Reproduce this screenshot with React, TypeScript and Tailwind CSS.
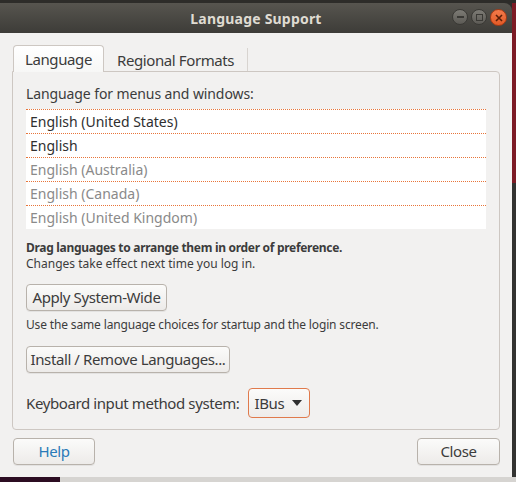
import React from "react";

const font = { fontFamily: '"Noto Sans", "Open Sans", sans-serif' };

function Btn({ children, className = "" }: { children: React.ReactNode; className?: string }) {
  return (
    <div
      className={
        "flex items-center justify-center whitespace-nowrap rounded-[4px] border border-[#b8b2ab] bg-gradient-to-b from-[#fbfbfa] to-[#edebe9] shadow-[0_1px_0_rgba(0,0,0,0.06)] text-[15px] tracking-[-0.4px] text-[#3c3c3c] " +
        className
      }
    >
      {children}
    </div>
  );
}

export default function App() {
  const langs = [
    { t: "English (United States)", dark: true },
    { t: "English", dark: true },
    { t: "English (Australia)", dark: false },
    { t: "English (Canada)", dark: false },
    { t: "English (United Kingdom)", dark: false },
  ];
  return (
    <div className="w-[516px] h-[482px] overflow-hidden flex flex-col bg-[#2e2d2b]" style={font}>
      <div className="h-[3px] bg-[#2d2c29] shrink-0" />
      <div className="flex h-[474px] shrink-0">
        <div className="w-[512px] flex flex-col rounded-tr-[8px] overflow-hidden">
          {/* title bar */}
          <div className="h-[30px] shrink-0 relative flex items-center justify-center bg-gradient-to-b from-[#57554f] to-[#3d3c38]">
            <span className="text-[14px] font-bold text-[#dfdbd2] tracking-[0.2px]">Language Support</span>
            <div className="absolute right-[5px] top-[6px] flex gap-[3px]">
              <div className="w-[16px] h-[16px] rounded-full bg-gradient-to-b from-[#7d7b75] to-[#5c5a55] border border-[#3a3935] flex items-center justify-center">
                <div className="w-[7px] h-[2px] bg-[#3a3935]" />
              </div>
              <div className="w-[16px] h-[16px] rounded-full bg-gradient-to-b from-[#7d7b75] to-[#5c5a55] border border-[#3a3935] flex items-center justify-center">
                <div className="w-[7px] h-[7px] border-[1.5px] border-[#3a3935]" />
              </div>
              <div className="w-[17px] h-[17px] rounded-full bg-gradient-to-b from-[#f37a4a] to-[#e25a26] border border-[#a83a14] flex items-center justify-center">
                <svg width="8" height="8" viewBox="0 0 8 8">
                  <path d="M1 1 L7 7 M7 1 L1 7" stroke="#5a1e08" strokeWidth="1.6" />
                </svg>
              </div>
            </div>
          </div>
          {/* body */}
          <div className="flex-1 bg-[#f2f1f0] px-[12px] pt-[12px] flex flex-col">
            {/* tabs */}
            <div className="flex items-end h-[27px] shrink-0">
              <div className="w-[91px] h-[27px] ml-[1px] rounded-t-[4px] border border-b-0 border-[#cdc7c2] bg-gradient-to-b from-[#ffffff] to-[#f7f7f6] flex items-center justify-center text-[15px] tracking-[-0.4px] text-[#3c3c3c] relative z-10">
                Language
              </div>
              <div className="h-[24px] flex items-center pl-[13px] pr-[13px] border-r border-[#d8d4d0] text-[15px] tracking-[-0.4px] text-[#3c3c3c]">
                Regional Formats
              </div>
            </div>
            {/* panel */}
            <div className="h-[359px] -mt-[1px] border border-[#cdc7c2] rounded-b-[4px] rounded-tr-[4px] pl-[13px] pr-[13px] pt-[12px] flex flex-col shrink-0">
              <div className="text-[14px] tracking-[-0.1px] text-[#3c3c3c] leading-[20px] h-[20px]">Language for menus and windows:</div>
              <div className="mt-[5px] bg-white flex flex-col">
                {langs.map((l) => (
                  <div
                    key={l.t}
                    className={
                      "h-[24px] border-t border-dotted border-[#e8753a] pl-[4px] flex items-center text-[14px] " +
                      (l.dark ? "text-[#2f2f2f]" : "text-[#8a8a8a]")
                    }
                  >
                    {l.t}
                  </div>
                ))}
              </div>
              <div className="mt-[11px] text-[12px] font-bold tracking-[-0.3px] text-[#3c3c3c] leading-[16px]">
                Drag languages to arrange them in order of preference.
              </div>
              <div className="text-[12px] text-[#3c3c3c] leading-[16px]">Changes take effect next time you log in.</div>
              <Btn className="mt-[12px] w-[141px] h-[27px]">Apply System-Wide</Btn>
              <div className="mt-[6px] text-[12px] tracking-[-0.15px] text-[#3c3c3c] leading-[16px]">
                Use the same language choices for startup and the login screen.
              </div>
              <Btn className="mt-[13px] w-[204px] h-[27px]">Install / Remove Languages...</Btn>
              <div className="mt-[15px] flex items-center h-[30px]">
                <span className="text-[15px] tracking-[-0.4px] text-[#3c3c3c]">Keyboard input method system:</span>
                <div className="ml-[8px] w-[62px] h-[30px] rounded-[4px] border border-[#e07a4c] bg-gradient-to-b from-[#fbfbfa] to-[#eeecea] flex items-center pl-[6px] pr-[7px] justify-between text-[15px] tracking-[-0.4px] text-[#3c3c3c]">
                  <span>IBus</span>
                  <svg width="10" height="6" viewBox="0 0 10 6">
                    <path d="M0 0 L10 0 L5 6 Z" fill="#2f2f2f" />
                  </svg>
                </div>
              </div>
            </div>
            {/* bottom buttons */}
            <div className="mt-[8px] flex justify-between pl-[1px]">
              <Btn className="w-[82px] h-[27px] !text-[#2a7ab8]">Help</Btn>
              <Btn className="w-[83px] h-[27px]">Close</Btn>
            </div>
          </div>
        </div>
        <div className="w-[4px] flex flex-col">
          <div className="h-[180px] bg-[#7d1b25]" />
          <div className="flex-1 bg-[#333331]" />
        </div>
      </div>
      <div className="flex-1 bg-[#d6d4d1] relative">
        <div className="absolute left-0 top-0 w-[60px] h-[5px] bg-[#2c0d22]" />
      </div>
    </div>
  );
}
